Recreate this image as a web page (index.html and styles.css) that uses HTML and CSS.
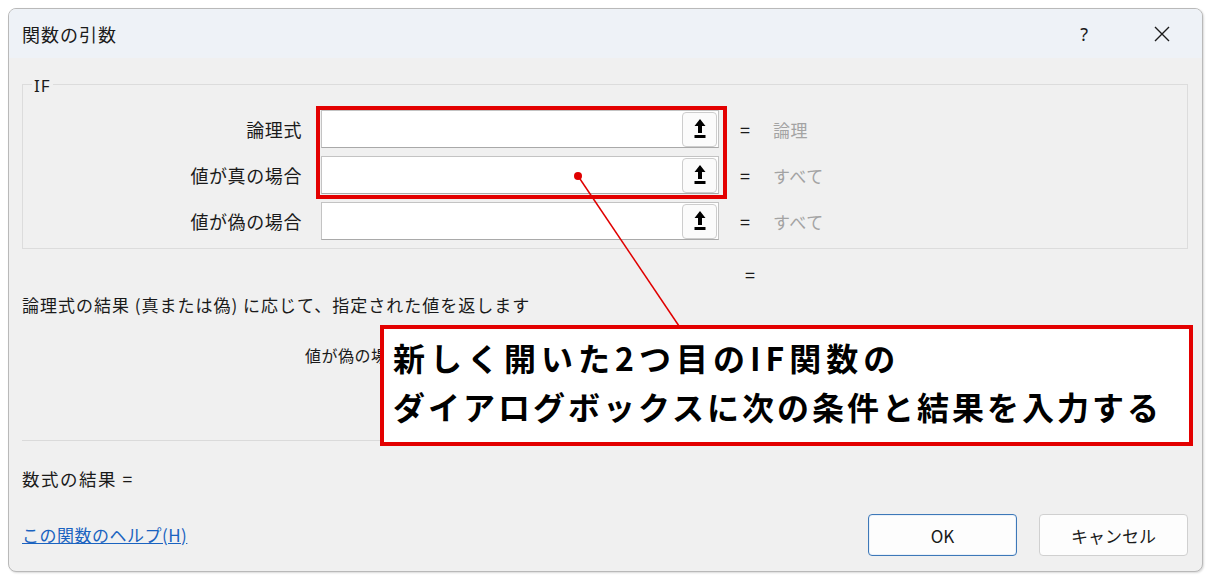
FILE: index.html
```html
<!DOCTYPE html>
<html lang="ja">
<head>
<meta charset="utf-8">
<link rel="stylesheet" href="styles.css">
</head>
<body>
<div class="dialog">
  <div class="titlebar">
    <span class="title">関数の引数</span>
    <span class="help-q">?</span>
    <svg class="close" width="16" height="16" viewBox="0 0 16 16"><path d="M1 1 L15 15 M15 1 L1 15" stroke="#1a1a1a" stroke-width="1.4" fill="none"/></svg>
  </div>
  <div class="content">
    <div class="group">
      <span class="legend">IF</span>
      <div class="row">
        <span class="label">論理式</span>
        <div class="input"><span class="refbtn"><svg width="12" height="22" viewBox="0 0 12 22"><path d="M6 1 L11.5 8 L8 8 L8 15 L4 15 L4 8 L0.5 8 Z" fill="#000"/><rect x="0.5" y="17" width="11" height="3" fill="#000"/></svg></span></div>
        <span class="eq">=</span>
        <span class="val">論理</span>
      </div>
      <div class="row">
        <span class="label">値が真の場合</span>
        <div class="input"><span class="refbtn"><svg width="12" height="22" viewBox="0 0 12 22"><path d="M6 1 L11.5 8 L8 8 L8 15 L4 15 L4 8 L0.5 8 Z" fill="#000"/><rect x="0.5" y="17" width="11" height="3" fill="#000"/></svg></span></div>
        <span class="eq">=</span>
        <span class="val">すべて</span>
      </div>
      <div class="row">
        <span class="label">値が偽の場合</span>
        <div class="input"><span class="refbtn"><svg width="12" height="22" viewBox="0 0 12 22"><path d="M6 1 L11.5 8 L8 8 L8 15 L4 15 L4 8 L0.5 8 Z" fill="#000"/><rect x="0.5" y="17" width="11" height="3" fill="#000"/></svg></span></div>
        <span class="eq">=</span>
        <span class="val">すべて</span>
      </div>
    </div>
    <div class="result-eq">=</div>
    <div class="desc">論理式の結果 (真または偽) に応じて、指定された値を返します</div>
    <div class="argdesc">値が偽の場合:</div>
    <div class="sep"></div>
    <div class="formula">数式の結果 =</div>
    <div class="footer">
      <a class="helplink" href="#">この関数のヘルプ(H)</a>
      <div class="buttons">
        <button class="btn btn-ok">OK</button>
        <button class="btn">キャンセル</button>
      </div>
    </div>
  </div>
</div>

<div class="hl-box"></div>
<svg class="pointer" width="1213" height="581" viewBox="0 0 1213 581">
  <line x1="578" y1="176" x2="679" y2="326" stroke="#e00000" stroke-width="1.5"/>
  <circle cx="578" cy="176" r="4" fill="#e00000"/>
</svg>
<div class="callout">
  <div class="callout-line line1">新しく開いた2つ目のIF関数の</div>
  <div class="callout-line">ダイアログボックスに次の条件と結果を入力する</div>
</div>
</body>
</html>
```

FILE: styles.css
```css
html, body {
  margin: 0;
  padding: 0;
  background: #ffffff;
}
body {
  width: 1213px;
  height: 581px;
  position: relative;
  overflow: hidden;
  font-family: "Noto Sans CJK JP", "Noto Sans", sans-serif;
  font-size: 17px;
  color: #1a1a1a;
}
.dialog {
  position: absolute;
  left: 8px;
  top: 8px;
  width: 1193px;
  height: 562px;
  border: 1px solid #b9b9b9;
  border-radius: 8px;
  background: #f0f0f0;
  overflow: hidden;
  display: flex;
  flex-direction: column;
  box-shadow: 1px 1px 2px rgba(0,0,0,0.15);
}
.titlebar {
  height: 49px;
  flex: none;
  background: #eef2f7;
  display: flex;
  align-items: center;
  padding-left: 13px;
}
.title {
  font-size: 18px;
  letter-spacing: 1px;
  flex: 1;
  line-height: 24px;
}
.help-q {
  font-family: "Noto Sans", sans-serif;
  font-size: 18px;
  margin-right: 66px;
}
.close {
  margin-right: 32px;
}
.content {
  padding: 0 14px 0 13px;
  display: flex;
  flex-direction: column;
  flex: 1;
}
.group {
  margin-top: 26px;
  border: 1px solid #dcdcdc;
  padding: 25px 0 8px 0;
  display: flex;
  flex-direction: column;
  gap: 8px;
  position: relative;
}
.legend {
  position: absolute;
  left: 9px;
  top: -11px;
  background: #f0f0f0;
  padding: 0 2px;
  line-height: 24px;
  font-family: "Noto Sans", sans-serif;
  font-size: 17px;
  letter-spacing: 1px;
}
.row {
  display: flex;
  align-items: center;
  height: 38px;
}
.label {
  width: 279px;
  text-align: right;
  margin-right: 19px;
  font-size: 18px;
  letter-spacing: 0.6px;
}
.input {
  width: 395px;
  height: 36px;
  background: #ffffff;
  border: 1px solid #c3c3c3;
  border-bottom-color: #a9a9a9;
  display: flex;
  justify-content: flex-end;
  align-items: center;
  padding-right: 1px;
}
.refbtn {
  width: 33px;
  height: 33px;
  border: 1px solid #cdcdcd;
  border-radius: 4px;
  background: #fbfbfb;
  display: flex;
  align-items: center;
  justify-content: center;
}
.eq {
  margin-left: 21px;
  width: 33px;
  font-size: 18px;
}
.val {
  color: #a3a3a3;
  font-size: 17px;
  letter-spacing: 0.5px;
}
.result-eq {
  margin-top: 13px;
  margin-left: 723px;
  line-height: 24px;
  font-size: 18px;
}
.desc {
  margin-top: 7px;
  line-height: 24px;
  font-size: 17px;
  letter-spacing: 1px;
}
.argdesc {
  margin-top: 26px;
  margin-left: 283px;
  line-height: 24px;
  font-size: 16px;
  letter-spacing: 0.5px;
}
.sep {
  margin-top: 73px;
  height: 1px;
  background: #dadada;
}
.formula {
  margin-top: 26px;
  line-height: 24px;
  font-size: 17.5px;
  letter-spacing: 1.5px;
}
.footer {
  margin-top: 23px;
  display: flex;
  align-items: center;
  justify-content: space-between;
}
.helplink {
  color: #1a63c0;
  text-decoration: underline;
  font-size: 17px;
  letter-spacing: 0.5px;
  line-height: 24px;
}
.buttons {
  display: flex;
  gap: 22px;
}
.btn {
  width: 149px;
  height: 42px;
  border: 1px solid #d0d0d0;
  border-radius: 4px;
  background: #fdfdfd;
  font-family: "Noto Sans CJK JP", "Noto Sans", sans-serif;
  font-size: 17px;
  color: #1a1a1a;
  padding: 0;
}
.btn-ok {
  border: 1px solid #3d78b8;
  box-shadow: inset 0 0 0 1px #eaf1f9;
}
.hl-box {
  position: absolute;
  left: 316px;
  top: 106px;
  width: 403px;
  height: 85px;
  border: 4px solid #e30000;
}
.pointer {
  position: absolute;
  left: 0;
  top: 0;
}
.callout {
  position: absolute;
  left: 380px;
  top: 325px;
  height: 105px;
  width: 796px;
  border: 4px solid #e30000;
  background: #ffffff;
  padding: 0 0 8px 9px;
  box-sizing: content-box;
  display: flex;
  flex-direction: column;
  justify-content: center;
}
.callout-line {
  font-family: "Noto Sans CJK JP", sans-serif;
  font-weight: 700;
  font-size: 32px;
  letter-spacing: 3px;
  line-height: 49px;
  color: #000;
  white-space: nowrap;
}
.line1 {
  letter-spacing: 5px;
}
```
